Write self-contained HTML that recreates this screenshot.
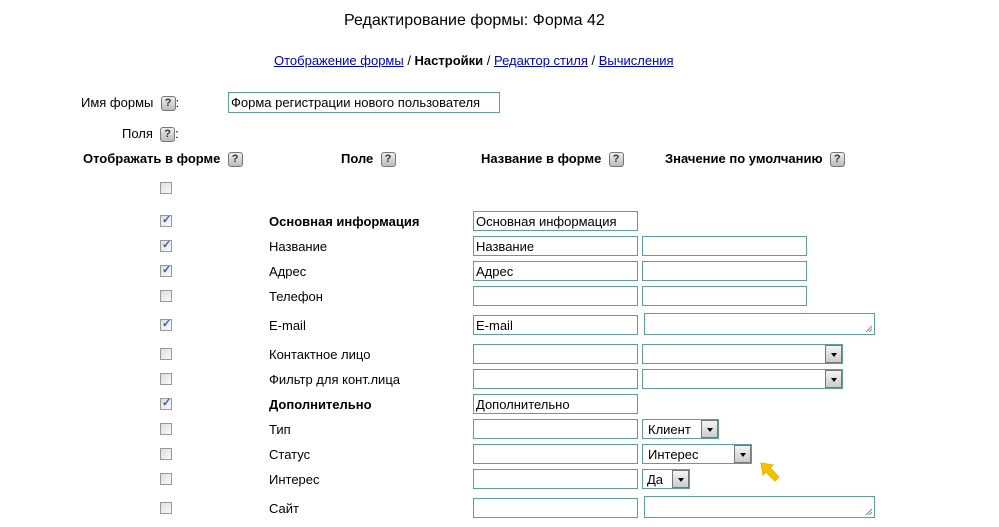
<!DOCTYPE html>
<html><head><meta charset="utf-8"><style>
body{margin:0;width:999px;height:527px;background:#fff;font-family:"Liberation Sans",Arial,sans-serif;font-size:13px;color:#000;position:relative;overflow:hidden}
.a{position:absolute;white-space:nowrap}
.h{display:inline-block;width:13px;height:13px;border:1px solid #777;border-radius:3px;background:linear-gradient(#eee,#bbb);font-size:11px;font-weight:bold;line-height:13px;text-align:center;color:#333;vertical-align:middle}
.cb{position:absolute;left:160px;width:12px;height:12px;border:1px solid #999;background:linear-gradient(135deg,#ddd,#fafafa);box-sizing:border-box}
.cb.c::after{content:"✓";position:absolute;left:1px;top:-3px;font-size:11px;color:#3a5ea8;font-weight:bold}
.in{position:absolute;height:20px;border:1px solid #5f9ea0;box-sizing:border-box;font-size:13px;line-height:20px;padding-left:2px;background:#fff;white-space:nowrap}
.sel::after{content:"";position:absolute;right:0;top:0;width:17px;height:18px;border:1px solid #777;background:linear-gradient(#f4f4f4,#ccc);box-sizing:border-box}
.sel::before{content:"";position:absolute;right:5px;top:8px;border:3.5px solid transparent;border-top:4px solid #000;z-index:2}
.ta::after{content:"";position:absolute;right:2px;bottom:2px;width:6px;height:6px;background:linear-gradient(135deg,transparent 45%,#888 45%,#888 55%,transparent 55%,transparent 70%,#888 70%,#888 80%,transparent 80%)}
a{color:#00c;text-decoration:underline}
</style></head><body>
<div class="a" style="left:344px;top:12px;font-size:16px">Редактирование формы: Форма 42</div>
<div class="a" style="left:274px;top:53px"><a>Отображение формы</a> / <b>Настройки</b> / <a>Редактор стиля</a> / <a>Вычисления</a></div>
<div class="a" style="left:81px;top:95px">Имя формы &nbsp;<span class="h">?</span>:</div>
<div class="in" style="left:228px;top:92px;width:272px;height:21px">Форма регистрации нового пользователя</div>
<div class="a" style="left:122px;top:126px">Поля &nbsp;<span class="h">?</span>:</div>
<div class="a" style="left:83px;top:151px;font-weight:bold">Отображать в форме &nbsp;<span class="h">?</span></div>
<div class="a" style="left:341px;top:151px;font-weight:bold">Поле &nbsp;<span class="h">?</span></div>
<div class="a" style="left:481px;top:151px;font-weight:bold">Название в форме &nbsp;<span class="h">?</span></div>
<div class="a" style="left:665px;top:151px;font-weight:bold">Значение по умолчанию &nbsp;<span class="h">?</span></div>

<div class="cb" style="top:182px"></div>
<div class="cb c" style="top:215px"></div><div class="a" style="left:269px;top:214px;font-weight:bold">Основная информация</div><div class="in" style="left:473px;top:211px;width:165px">Основная информация</div>
<div class="cb c" style="top:240px"></div><div class="a" style="left:269px;top:239px">Название</div><div class="in" style="left:473px;top:236px;width:165px">Название</div><div class="in" style="left:642px;top:236px;width:165px"></div>
<div class="cb c" style="top:265px"></div><div class="a" style="left:269px;top:264px">Адрес</div><div class="in" style="left:473px;top:261px;width:165px">Адрес</div><div class="in" style="left:642px;top:261px;width:165px"></div>
<div class="cb" style="top:290px"></div><div class="a" style="left:269px;top:289px">Телефон</div><div class="in" style="left:473px;top:286px;width:165px"></div><div class="in" style="left:642px;top:286px;width:165px"></div>
<div class="cb c" style="top:319px"></div><div class="a" style="left:269px;top:318px">E-mail</div><div class="in" style="left:473px;top:315px;width:165px">E-mail</div><div class="in ta" style="left:644px;top:313px;width:231px;height:22px"></div>
<div class="cb" style="top:348px"></div><div class="a" style="left:269px;top:347px">Контактное лицо</div><div class="in" style="left:473px;top:344px;width:165px"></div><div class="in sel" style="left:642px;top:344px;width:201px"></div>
<div class="cb" style="top:373px"></div><div class="a" style="left:269px;top:372px">Фильтр для конт.лица</div><div class="in" style="left:473px;top:369px;width:165px"></div><div class="in sel" style="left:642px;top:369px;width:201px"></div>
<div class="cb c" style="top:398px"></div><div class="a" style="left:269px;top:397px;font-weight:bold">Дополнительно</div><div class="in" style="left:473px;top:394px;width:165px">Дополнительно</div>
<div class="cb" style="top:423px"></div><div class="a" style="left:269px;top:422px">Тип</div><div class="in" style="left:473px;top:419px;width:165px"></div><div class="in sel" style="left:642px;top:419px;width:77px;padding-left:5px">Клиент</div>
<div class="cb" style="top:448px"></div><div class="a" style="left:269px;top:447px">Статус</div><div class="in" style="left:473px;top:444px;width:165px"></div><div class="in sel" style="left:642px;top:444px;width:110px;padding-left:5px">Интерес</div>
<div class="cb" style="top:473px"></div><div class="a" style="left:269px;top:472px">Интерес</div><div class="in" style="left:473px;top:469px;width:165px"></div><div class="in sel" style="left:642px;top:469px;width:48px;padding-left:4px">Да</div>
<div class="cb" style="top:502px"></div><div class="a" style="left:269px;top:501px">Сайт</div><div class="in" style="left:473px;top:498px;width:165px"></div><div class="in ta" style="left:644px;top:496px;width:231px;height:22px"></div>
<svg class="a" style="left:758px;top:460px" width="26" height="26" viewBox="0 0 26 26"><path d="M3 3 L15 5 L12 8 L21 17 L17 21 L8 12 L5 15 Z" fill="#f5c000" stroke="#e8b400" stroke-width="1"/></svg>
</body></html>
